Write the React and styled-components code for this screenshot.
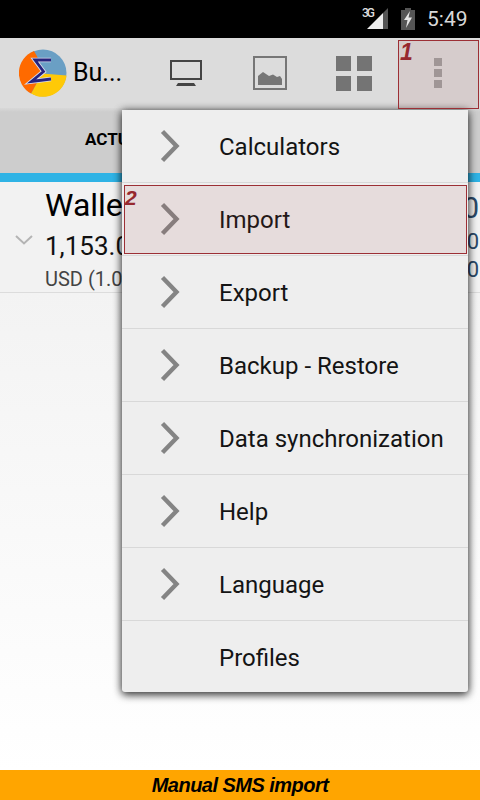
import React from "react";
import styled, { createGlobalStyle } from "styled-components";

const Global = createGlobalStyle`
  html, body { margin: 0; padding: 0; width: 480px; height: 800px; overflow: hidden; background: #fff; }
  #root { width: 480px; height: 800px; }
  * { box-sizing: border-box; }
`;

const Phone = styled.div`
  position: relative; width: 480px; height: 800px; display: flex; flex-direction: column;
  font-family: Roboto, "Liberation Sans", sans-serif; color: #000; overflow: hidden; background: #fff;
`;
const StatusBar = styled.div`
  height: 38px; background: #000; display: flex; align-items: center; justify-content: flex-end;
  flex: none;
`;
const Clock = styled.span`
  font-size: 21px; color: #d8d8d8; width: 41px; margin: 0 12px 0 12px; line-height: 38px; white-space: nowrap;
`;
const SignalGap = styled.span`width: 13px;`;
const ActionBar = styled.div`
  height: 70px; flex: none; background: #dcdcdc; display: flex; align-items: center; padding-left: 19px;
`;
const Title = styled.span`
  font-size: 25px; width: 71px; margin-left: 6px; line-height: 30px; padding-bottom: 1px;
`;
const ActionSlot = styled.div`
  width: 84px; height: 70px; display: flex; align-items: center; justify-content: center;
`;
const Tabs = styled.div`
  height: 74px; flex: none; background: linear-gradient(#d8d8d8, #cdcdcd 4px); border-bottom: 9px solid #2fb3e5;
  display: flex; align-items: center;
  padding-left: 85px; padding-bottom: 3px; font-size: 17px; font-weight: 700;
`;
const WalletRow = styled.div`
  height: 111px; flex: none; border-bottom: 1px solid #dcdcdc; display: flex; align-items: stretch;
  background: #f2f2f2;
`;
const Chevron = styled.div`
  width: 45px; flex: none; display: flex; justify-content: center; padding: 53px 0 0 2px;
`;
const WalletInfo = styled.div`
  flex: 1; display: flex; flex-direction: column; padding-top: 2px;
`;
const WalletName = styled.div`font-size: 32px; line-height: 42px;`;
const WalletAmount = styled.div`font-size: 26px; line-height: 36px; color: #111; padding-top: 2px;`;
const WalletCurrency = styled.div`font-size: 20px; line-height: 30px; color: #444;`;
const WalletValues = styled.div`
  width: 30px; display: flex; flex-direction: column; align-items: flex-end; color: #2c4a68; padding: 6px 1px 0 0;
`;
const Value = styled.div`
  font-size: ${p => p.$size}px; line-height: ${p => p.$line}px;
`;
const Spacer = styled.div`
  flex: 1;
  background: linear-gradient(#f3f3f3, #fff);
`;
const Footer = styled.div`
  height: 30px; flex: none; background: #ffa500; display: flex; align-items: center; justify-content: center;
  font-family: "Liberation Sans", Arial, sans-serif; font-style: italic; font-weight: 700; font-size: 20px;
  letter-spacing: -0.53px; line-height: 30px;
`;
const Menu = styled.div`
  position: absolute; left: 122px; top: 110px; width: 346px; height: 582px; background: #eee;
  border-radius: 0 0 3px 3px;
  box-shadow: 0 3px 9px rgba(0,0,0,.65), 0 0 9px rgba(0,0,0,.45);
  display: flex; flex-direction: column;
`;
const MenuItem = styled.div`
  height: 73px; flex: none; display: flex; align-items: center; position: relative;
  border-bottom: 1px solid ${p => (p.$last ? "transparent" : "#d8d8d8")};
  font-size: 24px; color: #141414;
`;
const MenuIcon = styled.div`
  width: 97px; flex: none; display: flex; justify-content: flex-start; padding-left: 38px;
`;
const MenuLabel = styled.span`padding-top: 2px;`;
const Highlight = styled.div`
  position: absolute; border: 1px solid #9c2f35; background: rgba(170, 70, 70, 0.1); pointer-events: none;
`;
const TopHighlight = styled(Highlight)`left: 398px; top: 40px; width: 81px; height: 69px;`;
const ImportHighlight = styled(Highlight)`left: 124px; top: 185px; width: 343px; height: 69px;`;
const Mark = styled.span`
  position: absolute; font-family: "Liberation Sans", Arial, sans-serif; font-style: italic; font-weight: 700;
  color: #96282e;
`;
const TopMark = styled(Mark)`left: 400px; top: 41px; font-size: 23px; line-height: 23px;`;
const ImportMark = styled(Mark)`left: 125px; top: 187px; font-size: 21px; line-height: 21px;`;

const Arrow = () => (
  <svg width="20" height="34" viewBox="0 0 20 34">
    <path d="M2.5 2.5 L16.5 17 L2.5 31.5" fill="none" stroke="#848484" strokeWidth="4.4" />
  </svg>
);

const Logo = () => (
  <svg width="48" height="48" viewBox="0 0 48 48">
    <circle cx="24" cy="24" r="23.5" fill="#6a9fc4" />
    <path d="M23 24.5 L47.5 26.5 A23.5 23.5 0 0 1 12 44.5 Z" fill="#ffc907" />
    <path d="M15 2 A23.5 23.5 0 0 0 12 44.5 L23 24.5 Q 23 15 15 2 Z" fill="#ff6a00" />
    <path d="M32 11 L16 11 L24.5 22.5 L12.5 32.5 L32 30" fill="none" stroke="#d8dcec" strokeWidth="4.6" />
    <path d="M32 11 L16 11 L24.5 22.5 L12.5 32.5 L32 30" fill="none" stroke="#27237e" strokeWidth="2.8" />
  </svg>
);

const Monitor = () => (
  <svg width="32" height="26" viewBox="0 0 32 26">
    <rect x="1" y="1" width="30" height="18" fill="none" stroke="#444" strokeWidth="2" />
    <path d="M6 26 L8 23 H24 L26 26 Z" fill="#444" />
  </svg>
);

const Picture = () => (
  <svg width="34" height="34" viewBox="0 0 34 34">
    <rect x="1" y="1" width="32" height="32" fill="none" stroke="#767676" strokeWidth="2" />
    <path d="M5 29 V20 L10 16 L16 20 L20 18.5 L24 21 L27 20 L29 23 V29 Z" fill="#767676" />
  </svg>
);

const Grid = () => (
  <svg width="36" height="35" viewBox="0 0 36 35">
    <rect x="0" y="0" width="15" height="15" fill="#747474" />
    <rect x="21" y="0" width="15" height="15" fill="#747474" />
    <rect x="0" y="20" width="15" height="15" fill="#747474" />
    <rect x="21" y="20" width="15" height="15" fill="#747474" />
  </svg>
);

const Dots = () => (
  <svg width="8" height="30" viewBox="0 0 8 30">
    <rect width="8" height="8" fill="#a0a0a0" />
    <rect y="11" width="8" height="8" fill="#a0a0a0" />
    <rect y="22" width="8" height="8" fill="#a0a0a0" />
  </svg>
);

const Signal = () => (
  <svg width="26" height="30" viewBox="0 0 26 30">
    <text x="0" y="13" fontFamily="Roboto, sans-serif" fontSize="12" fontWeight="500" fill="#ddd" textLength="13">3G</text>
    <path d="M5 25 L21 9 V25 Z" fill="#eee" />
    <path d="M21 9 L26 4 V25 H21 Z" fill="#555" />
  </svg>
);

const Battery = () => (
  <svg width="14" height="22" viewBox="0 0 14 22">
    <rect x="4" y="0" width="6" height="2" fill="#555" />
    <rect x="0" y="2" width="14" height="20" fill="#555" />
    <path d="M9 3 L3 12 H6.5 L5 20 L11 9.5 H7.5 Z" fill="#e6e6e6" />
  </svg>
);

const Caret = () => (
  <svg width="18" height="10" viewBox="0 0 18 10">
    <path d="M1 1 L9 8.5 L17 1" fill="none" stroke="#b4b4b4" strokeWidth="2" />
  </svg>
);

const items = ["Calculators", "Import", "Export", "Backup - Restore", "Data synchronization", "Help", "Language", "Profiles"];

export default function App() {
  return (
    <Phone>
      <Global />
      <StatusBar>
        <Signal />
        <SignalGap />
        <Battery />
        <Clock>5:49</Clock>
      </StatusBar>
      <ActionBar>
        <Logo />
        <Title>Bu...</Title>
        <ActionSlot><Monitor /></ActionSlot>
        <ActionSlot><Picture /></ActionSlot>
        <ActionSlot><Grid /></ActionSlot>
        <ActionSlot><Dots /></ActionSlot>
      </ActionBar>
      <Tabs>ACTUAL</Tabs>
      <WalletRow>
        <Chevron><Caret /></Chevron>
        <WalletInfo>
          <WalletName>Wallet</WalletName>
          <WalletAmount>1,153.00</WalletAmount>
          <WalletCurrency>USD (1.00)</WalletCurrency>
        </WalletInfo>
        <WalletValues>
          <Value $size={29} $line={40}>0</Value>
          <Value $size={22} $line={28}>0</Value>
          <Value $size={22} $line={28}>0</Value>
        </WalletValues>
      </WalletRow>
      <Spacer />
      <Footer>Manual SMS import</Footer>
      <Menu>
        {items.map((t, i) => (
          <MenuItem key={t} $last={i === items.length - 1}>
            <MenuIcon>{i < items.length - 1 && <Arrow />}</MenuIcon>
            <MenuLabel>{t}</MenuLabel>
          </MenuItem>
        ))}
      </Menu>
      <TopHighlight />
      <TopMark>1</TopMark>
      <ImportHighlight />
      <ImportMark>2</ImportMark>
    </Phone>
  );
}
